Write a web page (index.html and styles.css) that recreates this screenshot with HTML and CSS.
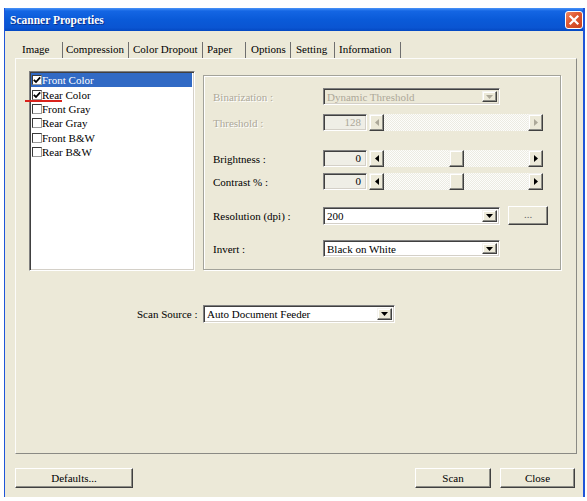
FILE: index.html
```html
<!DOCTYPE html>
<html>
<head>
<meta charset="utf-8">
<title>Scanner Properties</title>
<link rel="stylesheet" href="styles.css">
</head>
<body>
<div class="window">
  <div class="titlebar">
    <span class="title">Scanner Properties</span>
    <span class="close"><svg width="16" height="16" viewBox="0 0 16 16"><path d="M4.5 4.5L11.5 11.5M11.5 4.5L4.5 11.5" stroke="#fff" stroke-width="2.2" stroke-linecap="square"/></svg></span>
  </div>
  <div class="client">
    <div class="tabs">
      <span class="tab tab-image">Image</span>
      <span class="tab tab-comp">Compression</span>
      <span class="tab tab-drop">Color Dropout</span>
      <span class="tab tab-paper">Paper</span>
      <span class="tab tab-opt">Options</span>
      <span class="tab tab-set">Setting</span>
      <span class="tab tab-info">Information</span>
    </div>
    <div class="panel">
      <div class="main">
        <div class="listbox">
          <div class="item sel"><span class="cb"><svg width="8" height="8" viewBox="0 0 8 8"><path d="M0.8 3.8L3 6L7.2 1.4" fill="none" stroke="#000" stroke-width="1.8"/></svg></span>Front Color</div>
          <div class="item"><span class="cb"><svg width="8" height="8" viewBox="0 0 8 8"><path d="M0.8 3.8L3 6L7.2 1.4" fill="none" stroke="#000" stroke-width="1.8"/></svg></span>Rear Color</div>
          <div class="item"><span class="cb"></span>Front Gray</div>
          <div class="item"><span class="cb"></span>Rear Gray</div>
          <div class="item"><span class="cb"></span>Front B&amp;W</div>
          <div class="item"><span class="cb"></span>Rear B&amp;W</div>
        </div>
        <div class="group">
          <div class="row row-bin">
            <span class="lbl dis">Binarization :</span>
            <div class="combo combo-dis"><span class="val">Dynamic Threshold</span><span class="ddbtn"><svg width="7" height="4" viewBox="0 0 7 4"><path d="M0 0h7L3.5 4z"/></svg></span></div>
          </div>
          <div class="row row-thr">
            <span class="lbl dis">Threshold :</span>
            <div class="numbox numbox-dis">128</div>
            <div class="scroll scroll-dis">
              <span class="sbtn"><svg width="4" height="7" viewBox="0 0 4 7"><path d="M4 0v7L0 3.5z"/></svg></span>
              <span class="track"></span>
              <span class="sbtn"><svg width="4" height="7" viewBox="0 0 4 7"><path d="M0 0v7l4-3.5z"/></svg></span>
            </div>
          </div>
          <div class="row row-bri">
            <span class="lbl">Brightness :</span>
            <div class="numbox">0</div>
            <div class="scroll">
              <span class="sbtn"><svg width="4" height="7" viewBox="0 0 4 7"><path d="M4 0v7L0 3.5z"/></svg></span>
              <span class="track"><span class="thumb"></span></span>
              <span class="sbtn"><svg width="4" height="7" viewBox="0 0 4 7"><path d="M0 0v7l4-3.5z"/></svg></span>
            </div>
          </div>
          <div class="row row-con">
            <span class="lbl">Contrast % :</span>
            <div class="numbox">0</div>
            <div class="scroll">
              <span class="sbtn"><svg width="4" height="7" viewBox="0 0 4 7"><path d="M4 0v7L0 3.5z"/></svg></span>
              <span class="track"><span class="thumb"></span></span>
              <span class="sbtn"><svg width="4" height="7" viewBox="0 0 4 7"><path d="M0 0v7l4-3.5z"/></svg></span>
            </div>
          </div>
          <div class="row row-res">
            <span class="lbl">Resolution (dpi) :</span>
            <div class="combo combo-res"><span class="val">200</span><span class="ddbtn"><svg width="7" height="4" viewBox="0 0 7 4"><path d="M0 0h7L3.5 4z"/></svg></span></div>
            <span class="btn btn-more">...</span>
          </div>
          <div class="row row-inv">
            <span class="lbl">Invert :</span>
            <div class="combo"><span class="val">Black on White</span><span class="ddbtn"><svg width="7" height="4" viewBox="0 0 7 4"><path d="M0 0h7L3.5 4z"/></svg></span></div>
          </div>
        </div>
      </div>
      <div class="source-row">
        <span class="src-lbl">Scan Source :</span>
        <div class="combo combo-src"><span class="val">Auto Document Feeder</span><span class="ddbtn"><svg width="7" height="4" viewBox="0 0 7 4"><path d="M0 0h7L3.5 4z"/></svg></span></div>
      </div>
    </div>
    <div class="buttons">
      <span class="btn btn-def">Defaults...</span>
      <span class="spacer"></span>
      <span class="btn btn-scan">Scan</span>
      <span class="btn btn-close">Close</span>
    </div>
  </div>
  <div class="mark"></div>
</div>
</body>
</html>
```

FILE: styles.css
```css
* { box-sizing: border-box; }
html, body { margin: 0; padding: 0; background: #fff; }
body {
  font-family: "Liberation Serif", "Times New Roman", serif;
  font-size: 11px;
  color: #000;
}

.window {
  position: relative;
  margin: 8px 0 0 4px;
  width: 581px;
  border-left: 1px solid #1f55d8;
  border-right: 2px solid #1f55d8;
}

.titlebar {
  height: 23px;
  display: flex;
  align-items: center;
  justify-content: space-between;
  padding-left: 5px;
  background: linear-gradient(to bottom, #4a93f8 0, #1466e4 3px, #0a5ad8 50%, #0a55d2 85%, #0448c2 100%);
}
.title {
  color: #fff;
  font-weight: bold;
  font-size: 11.5px;
  text-shadow: 1px 1px 0 #0b2f8a;
}
.close {
  width: 18px;
  height: 18px;
  margin-right: 0;
  border: 1px solid #fff;
  border-radius: 3px;
  background: linear-gradient(135deg, #f08a66 0, #e05a33 40%, #c8401d 100%);
  display: flex;
  align-items: center;
  justify-content: center;
}

.client {
  background: #ece9d8;
  height: 466px;
  padding-top: 11px;
}

.tabs {
  display: flex;
  padding-left: 10px;
  height: 16px;
}
.tab {
  height: 16px;
  line-height: 15px;
  padding-left: 4px;
  border-right: 1px solid #6f6f6f;
  white-space: nowrap;
}
.tab-image { width: 48px; padding-left: 7px; }
.tab-comp { width: 66px; padding-left: 3px; }
.tab-drop { width: 74px; }
.tab-paper { width: 43px; }
.tab-opt { width: 45px; padding-left: 5px; }
.tab-set { width: 44px; padding-left: 5px; }
.tab-info { width: 66px; }

.panel {
  margin-left: 10px;
  width: 562px;
  height: 396px;
  border: 1px solid;
  border-color: #fcfcfa #8a8a84 #8a8a84 #fcfcfa;
  padding: 12px 0 0 13px;
}

.main {
  display: flex;
  align-items: flex-start;
  gap: 8px;
}

.listbox {
  width: 166px;
  height: 200px;
  background: #fff;
  border: 1px solid;
  border-color: #808080 #fff #fff #808080;
  box-shadow: inset 1px 1px 0 #404040, inset -1px -1px 0 #d4d0c8;
  padding: 1px 2px 0 1px;
}
.item {
  height: 14.4px;
  display: flex;
  align-items: center;
  white-space: nowrap;
  padding-left: 1px;
}
.item.sel {
  background: #316ac5;
  color: #fff;
}
.cb {
  width: 10px;
  height: 10px;
  margin-right: 0;
  background: #fff;
  border: 1px solid;
  border-color: #3a3a3a #9a9a9a #9a9a9a #3a3a3a;
  display: flex;
  align-items: center;
  justify-content: center;
}

.group {
  width: 358px;
  height: 195px;
  margin-top: 4px;
  border: 1px solid #a3a39a;
  box-shadow: inset 1px 1px 0 #fff, 1px 1px 0 #fff;
  padding: 12px 0 0 9px;
}
.row {
  display: flex;
  align-items: center;
  height: 17px;
}
.row-thr { margin-top: 9px; }
.row-bri { margin-top: 19px; }
.row-con { margin-top: 6px; }
.row-res { margin-top: 16px; height: 19px; }
.row-inv { margin-top: 15px; }

.lbl {
  width: 110px;
  flex: none;
  white-space: nowrap;
}
.dis {
  color: #aca899;
  text-shadow: 1px 1px 0 #fff;
}

.combo {
  width: 177px;
  height: 17px;
  display: flex;
  align-items: center;
  background: #fff;
  border: 1px solid;
  border-color: #808080 #fff #fff #808080;
  box-shadow: inset 1px 1px 0 #404040, inset -1px -1px 0 #d4d0c8;
  padding: 2px 2px 2px 3px;
}
.combo .val {
  flex: 1;
  white-space: nowrap;
  overflow: hidden;
}
.combo-dis {
  background: #ece9d8;
  color: #aca899;
}
.combo-res { height: 18px; }
.combo-src { width: 192px; height: 18px; }

.ddbtn, .sbtn {
  flex: none;
  width: 15px;
  height: 100%;
  background: #ece9d8;
  border: 1px solid;
  border-color: #f4f3ee #404040 #404040 #f4f3ee;
  box-shadow: inset -1px -1px 0 #8e8e87, inset 1px 1px 0 #fff;
  display: flex;
  align-items: center;
  justify-content: center;
  color: #000;
}
.ddbtn svg, .sbtn svg { fill: currentColor; display: block; }
.combo-dis .ddbtn { color: #aca899; }

.numbox {
  width: 44px;
  height: 17px;
  flex: none;
  background: #efeee6;
  border: 1px solid;
  border-color: #808080 #fff #fff #808080;
  box-shadow: inset 1px 1px 0 #404040, inset -1px -1px 0 #d4d0c8;
  text-align: right;
  padding: 0 5px 0 0;
  line-height: 15px;
}
.numbox-dis { color: #aca899; }

.scroll {
  width: 174px;
  height: 17px;
  margin-left: 2px;
  display: flex;
}
.scroll-dis .sbtn { color: #aca899; }
.track {
  flex: 1;
  display: flex;
  justify-content: center;
  background: repeating-conic-gradient(#fdfdfb 0 25%, #ecebe2 0 50%) 0 0 / 2px 2px;
}
.thumb {
  width: 15px;
  height: 100%;
  background: #ece9d8;
  border: 1px solid;
  border-color: #f4f3ee #404040 #404040 #f4f3ee;
  box-shadow: inset -1px -1px 0 #8e8e87, inset 1px 1px 0 #fff;
}

.btn {
  display: flex;
  align-items: center;
  justify-content: center;
  background: #ece9d8;
  border: 1px solid;
  border-color: #fff #404040 #404040 #fff;
  box-shadow: inset -1px -1px 0 #8e8e87;
  white-space: nowrap;
}
.btn-more {
  width: 40px;
  height: 19px;
  margin-left: 8px;
  color: #6a6a6a;
  padding-bottom: 3px;
}

.source-row {
  display: flex;
  align-items: center;
  margin-top: 34px;
  padding-left: 108px;
}
.src-lbl {
  width: 66px;
  white-space: nowrap;
}

.buttons {
  display: flex;
  margin-top: 14px;
  padding: 0 8px 0 10px;
}
.spacer { flex: 1; }
.buttons .btn { height: 20px; }
.btn-def { width: 118px; }
.btn-scan { width: 76px; margin-right: 9px; }
.btn-close { width: 75px; }

.mark {
  position: absolute;
  left: 20px;
  top: 92px;
  width: 37px;
  height: 2px;
  background: #d9221c;
}
```
